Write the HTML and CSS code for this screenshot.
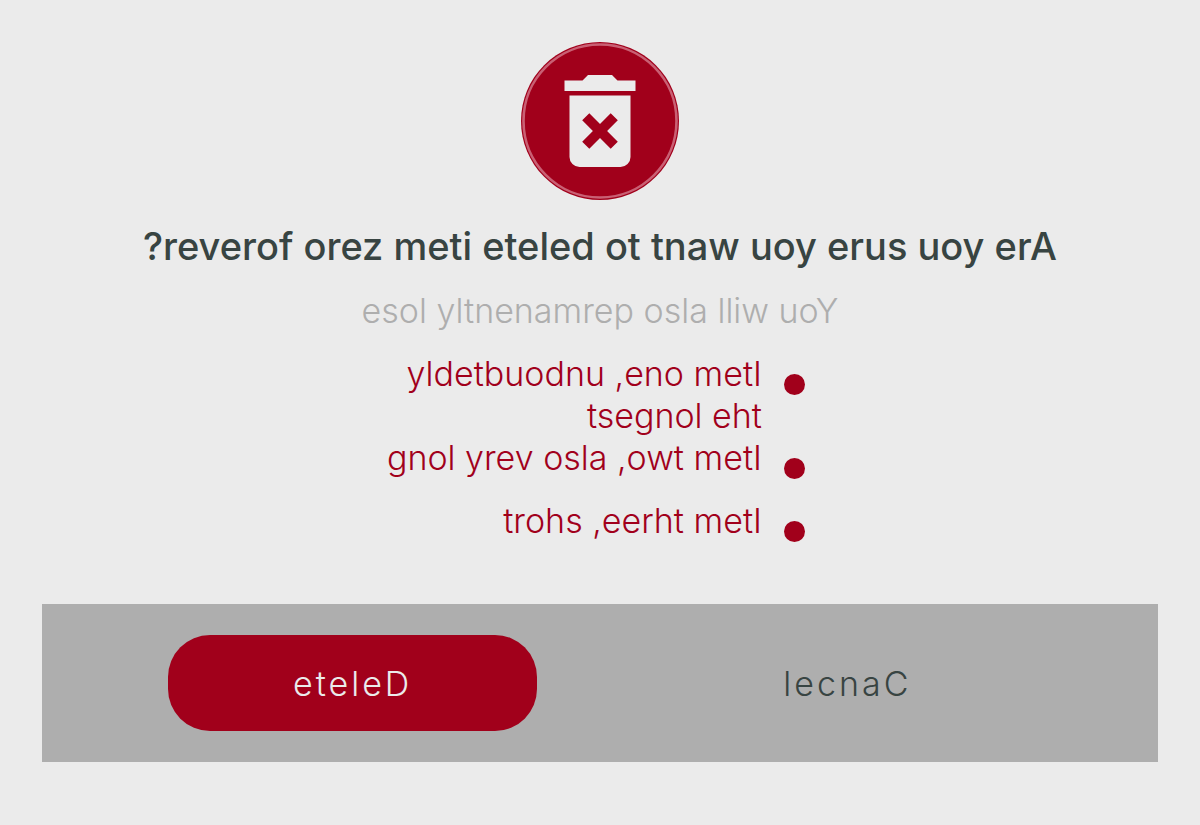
FILE: index.html
```
<!DOCTYPE html>
<html lang="en">
<head>
<meta charset="utf-8">
<meta name="viewport" content="width=device-width, initial-scale=1">
<title>Delete item</title>
<link rel="stylesheet" href="styles.css">
</head>
<body>
<main class="dialog">
  <svg class="badge" viewBox="0 0 158 158" aria-hidden="true">
    <circle class="badge-fill" cx="79" cy="79" r="79"/>
    <circle class="badge-ring" cx="79" cy="79" r="76.5"/>
    <path class="badge-bin" d="M43.5 38.5h18l5.5-5.5h24l5.5 5.5h18V49h-71z"/>
    <path class="badge-bin" fill-rule="evenodd" d="M48.5 53.5h61V115a10 10 0 0 1-10 10h-41a10 10 0 0 1-10-10z M68.3 71.2l-7.1 7.1L71.9 89l-10.7 10.7 7.1 7.1L79 96.1l10.7 10.7 7.1-7.1L86.1 89l10.7-10.7-7.1-7.1L79 81.9z"/>
  </svg>
  <h1 class="title mirrored">Are you sure you want to delete item zero forever?</h1>
  <p class="note mirrored">You will also permanently lose</p>
  <ul class="items">
    <li class="item"><span class="mirrored">Item one, undoubtedly the longest</span></li>
    <li class="item"><span class="mirrored">Item two, also very long</span></li>
    <li class="item"><span class="mirrored">Item three, short</span></li>
  </ul>
  <div class="actions">
    <button class="button button-delete mirrored" type="button">Delete</button>
    <button class="button mirrored" type="button">Cancel</button>
  </div>
</main>
</body>
</html>
```
FILE: styles.css
```
* {
  box-sizing: border-box;
}

body {
  margin: 0;
  background: #ebebeb;
  color: #384442;
  font-family: Inter, "Liberation Sans", sans-serif;
  font-size: 34px;
  font-weight: 300;
  line-height: 42px;
}

.mirrored {
  direction: rtl;
  unicode-bidi: bidi-override;
}

.dialog {
  display: flex;
  flex-direction: column;
  align-items: center;
  padding: 42px;
}

.badge {
  width: 158px;
  height: 158px;
}

.badge-fill {
  fill: #a1001b;
}

.badge-ring {
  fill: none;
  stroke: #c96074;
  stroke-width: 2.6;
}

.badge-bin {
  fill: #ebebeb;
}

.title {
  margin: 25px 0 0;
  font-size: 38px;
  font-weight: 500;
  line-height: 42px;
  text-align: center;
}

.note {
  margin: 23px 0 0;
  color: #aeaeae;
  text-align: center;
}

.items {
  width: 452px;
  max-width: 100%;
  margin: 21px 0 0;
  padding: 0 21px 0 0;
  list-style: none;
  color: #a1001b;
}

.item {
  display: flex;
  flex-direction: row-reverse;
  gap: 22px;
  min-height: 63px;
}

.item::before {
  content: "";
  flex: none;
  width: 21px;
  height: 21px;
  margin-top: 21px;
  border-radius: 50%;
  background: #a1001b;
}

.actions {
  display: flex;
  justify-content: space-evenly;
  align-self: stretch;
  margin-top: 41px;
  padding: 31px 0;
  background: #aeaeae;
}

.button {
  width: 33%;
  padding: 28px 0 26px;
  border: 0;
  border-radius: 42px;
  background: transparent;
  color: inherit;
  font: inherit;
  letter-spacing: 3px;
  cursor: pointer;
}

.button-delete {
  background: #a1001b;
  color: #ebebeb;
}
```
